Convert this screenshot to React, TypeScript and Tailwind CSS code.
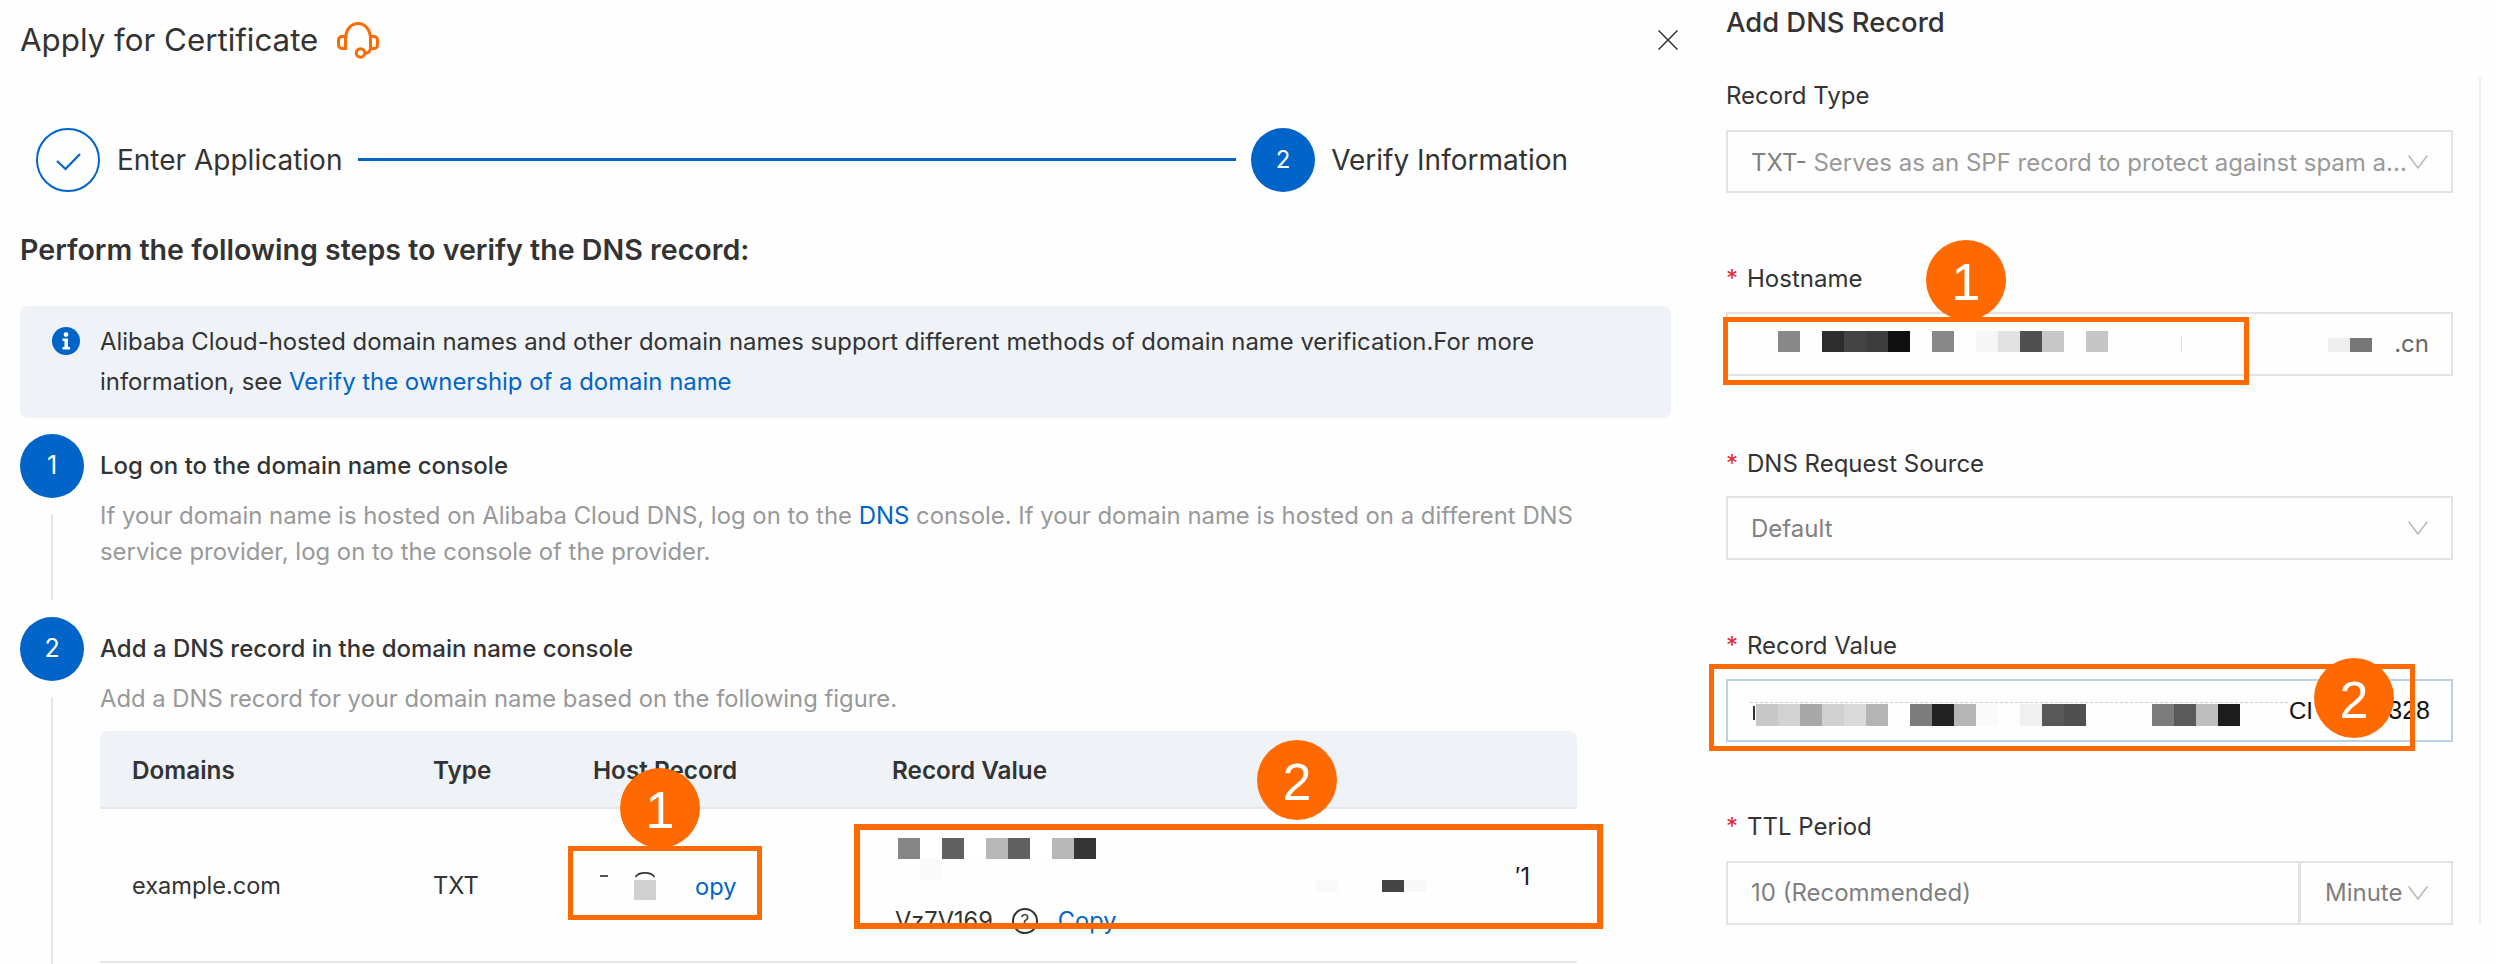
const FONT = "font-['Inter','Liberation_Sans',sans-serif]";

function Mosaic({ left, top, colors, w = 22, h = 22 }: { left: number; top: number; colors: string[]; w?: number; h?: number }) {
  return (
    <div className="absolute flex" style={{ left, top }}>
      {colors.map((c, i) => (
        <div key={i} style={{ width: w, height: h, background: c }} />
      ))}
    </div>
  );
}

function Chevron() {
  return (
    <svg width="20" height="14" viewBox="0 0 20 14" fill="none" className="shrink-0">
      <path d="M0.6 0.5 L10 13 L19.4 0.5" stroke="#b5b5b5" strokeWidth="1.4" />
    </svg>
  );
}

function Label({ text, required }: { text: string; required?: boolean }) {
  return (
    <div className={`flex items-center h-[36px] text-[24px] text-[#333333] ${required ? "pt-[2px]" : ""}`}>
      {required && <span className="w-[21px] text-[#e8262d]">*</span>}
      {text}
    </div>
  );
}

function Annot({ left, top, n }: { left: number; top: number; n: string }) {
  return (
    <div
      className="absolute w-[80px] h-[80px] rounded-full bg-[#ff6a00] text-white text-[52px] pt-[3px] flex items-center justify-center font-['Liberation_Sans',sans-serif]"
      style={{ left, top }}
    >
      {n}
    </div>
  );
}

function Box({ left, top, width, height, b = 5 }: { left: number; top: number; width: number; height: number; b?: number }) {
  return <div className="absolute border-[#ff6a00] border-solid" style={{ left, top, width, height, borderWidth: b }} />;
}

function StepCircle({ n }: { n: string }) {
  return (
    <div className="w-[64px] h-[64px] rounded-full bg-[#0064c8] text-white text-[25px] flex items-center justify-center shrink-0">{n}</div>
  );
}

export default function App() {
  return (
    <div className={`relative w-[2496px] h-[964px] overflow-hidden bg-[#fefefe] flex ${FONT} text-[#333333]`}>
      {/* Left panel */}
      <div className="w-[1726px] shrink-0 flex flex-col">
        <div className="h-[80px] flex items-center justify-between pl-[20px] pr-[48px] shrink-0">
          <div className="flex items-center gap-[19px]">
            <span className="text-[31.3px]">Apply for Certificate</span>
            <svg width="42" height="37" viewBox="0 0 42 37" fill="none" stroke="#ff6a00" strokeWidth="3">
              <path d="M8.5 14.5 H5 C3 14.5 1.5 16 1.5 18 V23 C1.5 25 3 26.5 5 26.5 H8.5 V17 C8.5 7.5 14 1.5 21 1.5 C28 1.5 33.5 7.5 33.5 17 V26.5 H37 C39 26.5 40.5 25 40.5 23 V18 C40.5 16 39 14.5 37 14.5 H33.5" />
              <path d="M33.5 26.5 C33 30 31 31 28 31.5" />
              <circle cx="23.5" cy="31" r="4.2" />
            </svg>
          </div>
          <svg width="20" height="20" viewBox="0 0 20 20" fill="none" stroke="#333333" strokeWidth="1.5">
            <path d="M0.5 0.5 L19.5 19.5 M19.5 0.5 L0.5 19.5" />
          </svg>
        </div>

        <div className="mt-[48px] h-[64px] pl-[36px] pr-[158px] flex items-center shrink-0">
          <div className="w-[64px] h-[64px] rounded-full border-2 border-[#0064c8] flex items-center justify-center shrink-0">
            <svg width="25" height="18" viewBox="0 0 25 18" fill="none" stroke="#0064c8" strokeWidth="2.2" className="mt-[3px]">
              <path d="M1 8 L9.5 16 L24 1" />
            </svg>
          </div>
          <span className="ml-[17px] text-[28px] whitespace-nowrap">Enter Application</span>
          <div className="flex-1 h-[3px] bg-[#0064c8] ml-[16px] mr-[15px] mb-[2px]" />
          <div className="w-[64px] h-[64px] rounded-full bg-[#0064c8] text-white text-[24px] flex items-center justify-center shrink-0">2</div>
          <span className="ml-[16px] text-[28px] whitespace-nowrap">Verify Information</span>
        </div>

        <div className="mt-[38px] h-[40px] pl-[20px] flex items-center text-[28.6px] font-semibold shrink-0">
          Perform the following steps to verify the DNS record:
        </div>

        <div className="mt-[36px] ml-[20px] w-[1651px] h-[112px] rounded-[8px] bg-[#eff3f8] flex pl-[32px] pt-[16px] shrink-0">
          <svg width="28" height="28" viewBox="0 0 28 28" className="mt-[5px] shrink-0">
            <circle cx="14" cy="14" r="14" fill="#0064c8" />
            <circle cx="14" cy="7.6" r="2.4" fill="#fff" />
            <path d="M10.5 11.5 H16 V20 H18 V22.5 H10.5 V20 H12.5 V14 H10.5 Z" fill="#fff" />
          </svg>
          <div className="ml-[20px] w-[1500px] text-[23.9px] leading-[40px]">
            Alibaba Cloud-hosted domain names and other domain names support different methods of domain name verification.For more information, see{" "}
            <span className="text-[#0064c8]">Verify the ownership of a domain name</span>
          </div>
        </div>

        {/* Step 1 */}
        <div className="mt-[16px] ml-[20px] flex gap-[16px] h-[183px] shrink-0">
          <div className="flex flex-col items-center w-[64px]">
            <StepCircle n="1" />
            <div className="mt-[16px] w-[2px] h-[86px] bg-[#e6e6e6]" />
          </div>
          <div className="flex-1">
            <div className="h-[64px] flex items-center text-[24px] font-medium">Log on to the domain name console</div>
            <div className="w-[1500px] text-[23.9px] leading-[36px] text-[#999999]">
              If your domain name is hosted on Alibaba Cloud DNS, log on to the <span className="text-[#0064c8]">DNS</span> console. If your domain name is hosted on a different DNS service provider, log on to the console of the provider.
            </div>
          </div>
        </div>

        {/* Step 2 */}
        <div className="ml-[20px] flex gap-[16px] flex-1">
          <div className="flex flex-col items-center w-[64px]">
            <StepCircle n="2" />
            <div className="mt-[16px] w-[2px] flex-1 bg-[#e6e6e6]" />
          </div>
          <div className="flex-1">
            <div className="h-[64px] flex items-center text-[24px] font-medium">Add a DNS record in the domain name console</div>
            <div className="h-[36px] text-[23.8px] leading-[36px] text-[#999999]">Add a DNS record for your domain name based on the following figure.</div>
            <div className="mt-[14px] w-[1477px]">
              <div className="grid grid-cols-[333px_160px_299px_1fr] h-[78px] pt-[2px] items-center bg-[#eff3f8] rounded-t-[8px] border-b-2 border-[#e4e6e9] text-[24.3px] font-semibold">
                <span className="pl-[32px]">Domains</span>
                <span>Type</span>
                <span>Host Record</span>
                <span>Record Value</span>
              </div>
              <div className="grid grid-cols-[333px_160px_299px_1fr] h-[154px] border-b-2 border-[#e6e6e6] text-[23.6px] items-center">
                <span className="pl-[32px] pt-[2px]">example.com</span>
                <span className="pt-[2px]">TXT</span>
                <span className="pl-[102px] pt-[4px] text-[#0064c8]">opy</span>
                <div className="flex flex-col leading-[36px]">
                  <div className="h-[27px]" />
                  <div className="h-[42px] w-[638px] text-right text-[#222222]">′1</div>
                  <div className="flex items-center h-[38px] pt-[2px] pl-[3px]">
                    Vz7V169
                    <span className="ml-[19px] w-[26px] h-[26px] rounded-full border-2 border-[#333333] flex items-center justify-center text-[17px]">?</span>
                    <span className="ml-[20px] text-[#0064c8]">Copy</span>
                  </div>
                </div>
              </div>
            </div>
          </div>
        </div>
      </div>

      {/* Right panel */}
      <div className="flex shrink-0">
        <div className="w-[727px] flex flex-col">
          <div className="h-[44px] pt-[2px] flex items-center text-[27.4px] font-medium">Add DNS Record</div>
          <div className="mt-[34px]"><Label text="Record Type" /></div>
          <div className="mt-[16px] h-[63px] border-2 border-[#e3e3e3] flex items-center justify-between pl-[23px] pr-[23px] text-[24px] text-[#999999]">
            <span className="whitespace-nowrap pt-[2px]"><span className="text-[#808080]">TXT-</span> Serves as an SPF record to protect against spam a...</span>
            <Chevron />
          </div>
          <div className="mt-[67px]"><Label text="Hostname" required /></div>
          <div className="mt-[16px] h-[64px] border-2 border-[#e3e3e3] flex items-center justify-end pr-[22px] text-[24px] text-[#666666]">.cn</div>
          <div className="mt-[69px]"><Label text="DNS Request Source" required /></div>
          <div className="mt-[15px] h-[64px] border-2 border-[#e3e3e3] flex items-center justify-between pl-[23px] pr-[23px] text-[24px] text-[#808080]">
            <span className="pt-[2px]">Default</span>
            <Chevron />
          </div>
          <div className="mt-[67px]"><Label text="Record Value" required /></div>
          <div className="mt-[16px] h-[63px] border-2 border-[#bcd2e4] flex items-center justify-end pr-[21px] text-[25px] text-[#111111] font-['Liberation_Sans',sans-serif]">328</div>
          <div className="mt-[66px]"><Label text="TTL Period" required /></div>
          <div className="mt-[17px] h-[64px] border-2 border-[#e3e3e3] flex text-[24px] text-[#808080]">
            <div className="w-[573px] border-r-[3px] border-[#e3e3e3] flex items-center pl-[23px]">10 (Recommended)</div>
            <div className="flex-1 flex items-center justify-between pl-[24px] pr-[23px]">
              Minute
              <Chevron />
            </div>
          </div>
        </div>
        <div className="ml-[26px] mt-[77px] w-[2px] h-[848px] bg-[#efefef]" />
      </div>

      {/* Redaction fragments over the values */}
      <div className="absolute left-[600px] top-[875px] w-[8px] h-[2px] bg-[#555555]" />
      <svg className="absolute left-[634px] top-[870px]" width="22" height="8" viewBox="0 0 22 8" fill="none">
        <path d="M1.5 7 C5 1.5 17 1.5 20.5 7" stroke="#333333" strokeWidth="1.6" />
      </svg>
      <Mosaic left={634} top={880} colors={["#d0d0d0"]} h={20} />
      <Mosaic left={898} top={838} colors={["#858585", "#ffffff", "#606060", "#ffffff", "#b8b8b8", "#606060", "#ffffff", "#b8b8b8", "#353535"]} h={21} />
      <Mosaic left={920} top={859} colors={["#fafafa"]} />
      <Mosaic left={1316} top={880} colors={["#f9f9f9"]} h={12} />
      <Mosaic left={1382} top={880} colors={["#444444", "#f8f8f8"]} h={12} />
      <Mosaic left={1778} top={331} colors={["#888888", "#fefefe", "#2d2d2d", "#444444", "#3d3d3d", "#0f0f0f", "#fefefe", "#888888", "#fefefe", "#f6f6f6", "#e2e2e2", "#505050", "#c8c8c8", "#fefefe", "#c6c6c6"]} h={21} />
      <div className="absolute left-[2181px] top-[335px] w-px h-[17px] bg-[#e0e0e0]" />
      <Mosaic left={2328} top={338} colors={["#eeeeee", "#777777"]} h={14} />
      <div className="absolute left-[1750px] top-[702px] w-[538px] h-0 border-t border-dashed border-[#cccccc]" />
      <div className="absolute left-[1753px] top-[706px] w-[2px] h-[14px] bg-[#333333]" />
      <Mosaic left={1756} top={704} colors={["#c8c8c8", "#d2d2d2", "#a8a8a8", "#d0d0d0", "#dadada", "#b4b4b4", "#fefefe", "#7c7c7c", "#222222", "#b6b6b6", "#fafafa", "#fefefe", "#f0f0f0", "#585858", "#505050", "#fefefe", "#fefefe", "#fefefe", "#7c7c7c", "#5a5a5a", "#bebebe", "#1c1c1c"]} />
      <div className="absolute left-[2289px] top-[693px] text-[24px] leading-[36px] text-[#111111] font-['Liberation_Sans',sans-serif]">CI</div>

      {/* Orange annotations */}
      <Box left={568} top={846} width={194} height={74} />
      <Annot left={620} top={768} n="1" />
      <Box left={854} top={824} width={749} height={105} b={6} />
      <Annot left={1257} top={740} n="2" />
      <Box left={1723} top={317} width={526} height={68} />
      <Annot left={1926} top={240} n="1" />
      <Box left={1709} top={664} width={706} height={87} />
      <Annot left={2314} top={658} n="2" />
    </div>
  );
}
